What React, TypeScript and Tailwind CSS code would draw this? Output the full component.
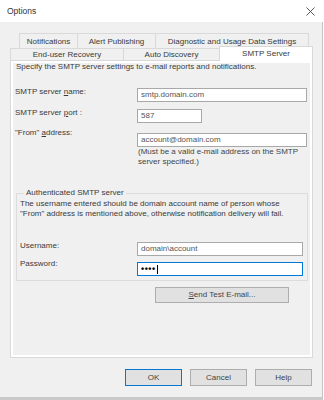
import React from "react";

export default function App() {
  return (
    <div className="w-[324px] h-[400px] bg-white overflow-hidden flex flex-col text-[8px] leading-[10px] text-[#3a3a3a] [font-family:'Liberation_Sans',Arial,sans-serif]">
      {/* Title bar */}
      <div className="h-[22px] shrink-0 flex items-center justify-between pl-[7px] pr-[9px]">
        <span className="text-[8.5px] text-[#333]">Options</span>
        <svg width="9" height="9" viewBox="0 0 9 9" className="block">
          <path d="M0.5 0.5 L8.5 8.5 M8.5 0.5 L0.5 8.5" stroke="#444" strokeWidth="0.9" fill="none" />
        </svg>
      </div>

      {/* Window body */}
      <div className="w-[323px] h-[378px] shrink-0 bg-[#f0f0f0] border-r border-r-[#c4c4c4] border-b-[3px] border-b-[#c9c9c9] flex flex-col pt-[11px]">
        {/* Tab row 1 */}
        <div className="flex h-[15px] ml-[19px]">
          <div className="w-[58px] h-full border-t border-l border-[#d9d9d9] flex items-center justify-center pt-[1px]">Notifications</div>
          <div className="w-[78px] h-full border-t border-l border-[#d9d9d9] flex items-center justify-center pt-[1px]">Alert Publishing</div>
          <div className="w-[154px] h-full border-t border-l border-r border-[#d9d9d9] flex items-center justify-center pt-[1px]">Diagnostic and Usage Data Settings</div>
        </div>
        {/* Tab row 2 */}
        <div className="flex h-[12px] ml-[10px]">
          <div className="w-[113px] h-full border-t border-l border-[#d9d9d9] flex items-center justify-center">End-user Recovery</div>
          <div className="w-[96px] h-full border-t border-l border-[#d9d9d9] flex items-center justify-center">Auto Discovery</div>
          <div className="relative z-10 w-[94px] h-[15px] -mt-[2px] bg-white border-t border-l border-r border-[#d9d9d9] flex justify-center pt-[2px]">SMTP Server</div>
        </div>

        {/* Tab panel */}
        <div className="ml-[10px] w-[303px] h-[298px] shrink-0 border border-[#d9d9d9] bg-[#f0f0f0] shadow-[inset_0_0_0_2px_#ffffff] flex flex-col">
          <div className="mt-[1px] ml-[5px]">Specify the SMTP server settings to e-mail reports and notifications.</div>

          {/* SMTP server name */}
          <div className="flex items-start mt-[15px] ml-[4px]">
            <div className="w-[122px]">SMTP server <u>n</u>ame:</div>
            <div className="mt-[1px] w-[170px] h-[14px] bg-white border border-[#a8a8a8] pl-[3px] flex items-center text-[#555]">smtp.domain.com</div>
          </div>

          {/* port */}
          <div className="flex items-start mt-[6px] ml-[4px]">
            <div className="w-[122px]">SMTP server <u>p</u>ort :</div>
            <div className="mt-[1px] w-[65px] h-[14px] bg-white border border-[#a8a8a8] pl-[3px] flex items-center text-[#555]">587</div>
          </div>

          {/* From address */}
          <div className="flex items-start mt-[5px] ml-[4px]">
            <div className="w-[122px]">"From" <u>a</u>ddress:</div>
            <div className="flex flex-col mt-[5px]">
              <div className="w-[170px] h-[14px] bg-white border border-[#a8a8a8] pl-[3px] flex items-center text-[#555]">account@domain.com</div>
              <div className="pl-[1px] text-[#444]">(Must be a valid e-mail address on the SMTP<br />server specified.)</div>
            </div>
          </div>

          {/* Group box */}
          <fieldset className="mt-[21px] ml-[5px] w-[292px] border border-[#dcdcdc] pl-[3px] pb-[4px]">
            <legend className="ml-[4px] px-[2px]">Authenticated SMTP server</legend>
            <div className="mt-[1px]">The username entered should be domain account name of person whose<br />"From" address is mentioned above, otherwise notification delivery will fail.</div>
            <div className="flex items-start mt-[22px]">
              <div className="w-[117px]">Username:</div>
              <div className="mt-[1px] w-[166px] h-[14px] bg-white border border-[#a8a8a8] pl-[3px] flex items-center text-[#555]">domain\account</div>
            </div>
            <div className="flex items-start mt-[3px]">
              <div className="w-[117px]">Password:</div>
              <div className="mt-[3px] w-[166px] h-[14px] bg-white border border-[#0078d7] pl-[3px] flex items-center">
                <span className="text-[9px] font-bold tracking-[0.5px] leading-[10px] text-black">••••</span>
                <span className="ml-[1px] h-[9px] border-l border-black" />
              </div>
            </div>
          </fieldset>

          <button className="mt-[6px] ml-[144px] w-[134px] h-[16px] bg-[#e1e1e1] border border-[#adadad] flex items-center justify-center text-[#444]">
            <span><u>S</u>end Test E-mail...</span>
          </button>
        </div>

        {/* Bottom buttons */}
        <div className="flex justify-end gap-[8px] pr-[10px] mt-[11px]">
          <button className="w-[57px] h-[17px] bg-[#e1e1e1] border border-[#0078d7] flex items-center justify-center text-[#444]">OK</button>
          <button className="w-[57px] h-[17px] bg-[#e1e1e1] border border-[#adadad] flex items-center justify-center text-[#444]">Cancel</button>
          <button className="w-[57px] h-[17px] bg-[#e1e1e1] border border-[#adadad] flex items-center justify-center text-[#444]">Help</button>
        </div>
      </div>
    </div>
  );
}
